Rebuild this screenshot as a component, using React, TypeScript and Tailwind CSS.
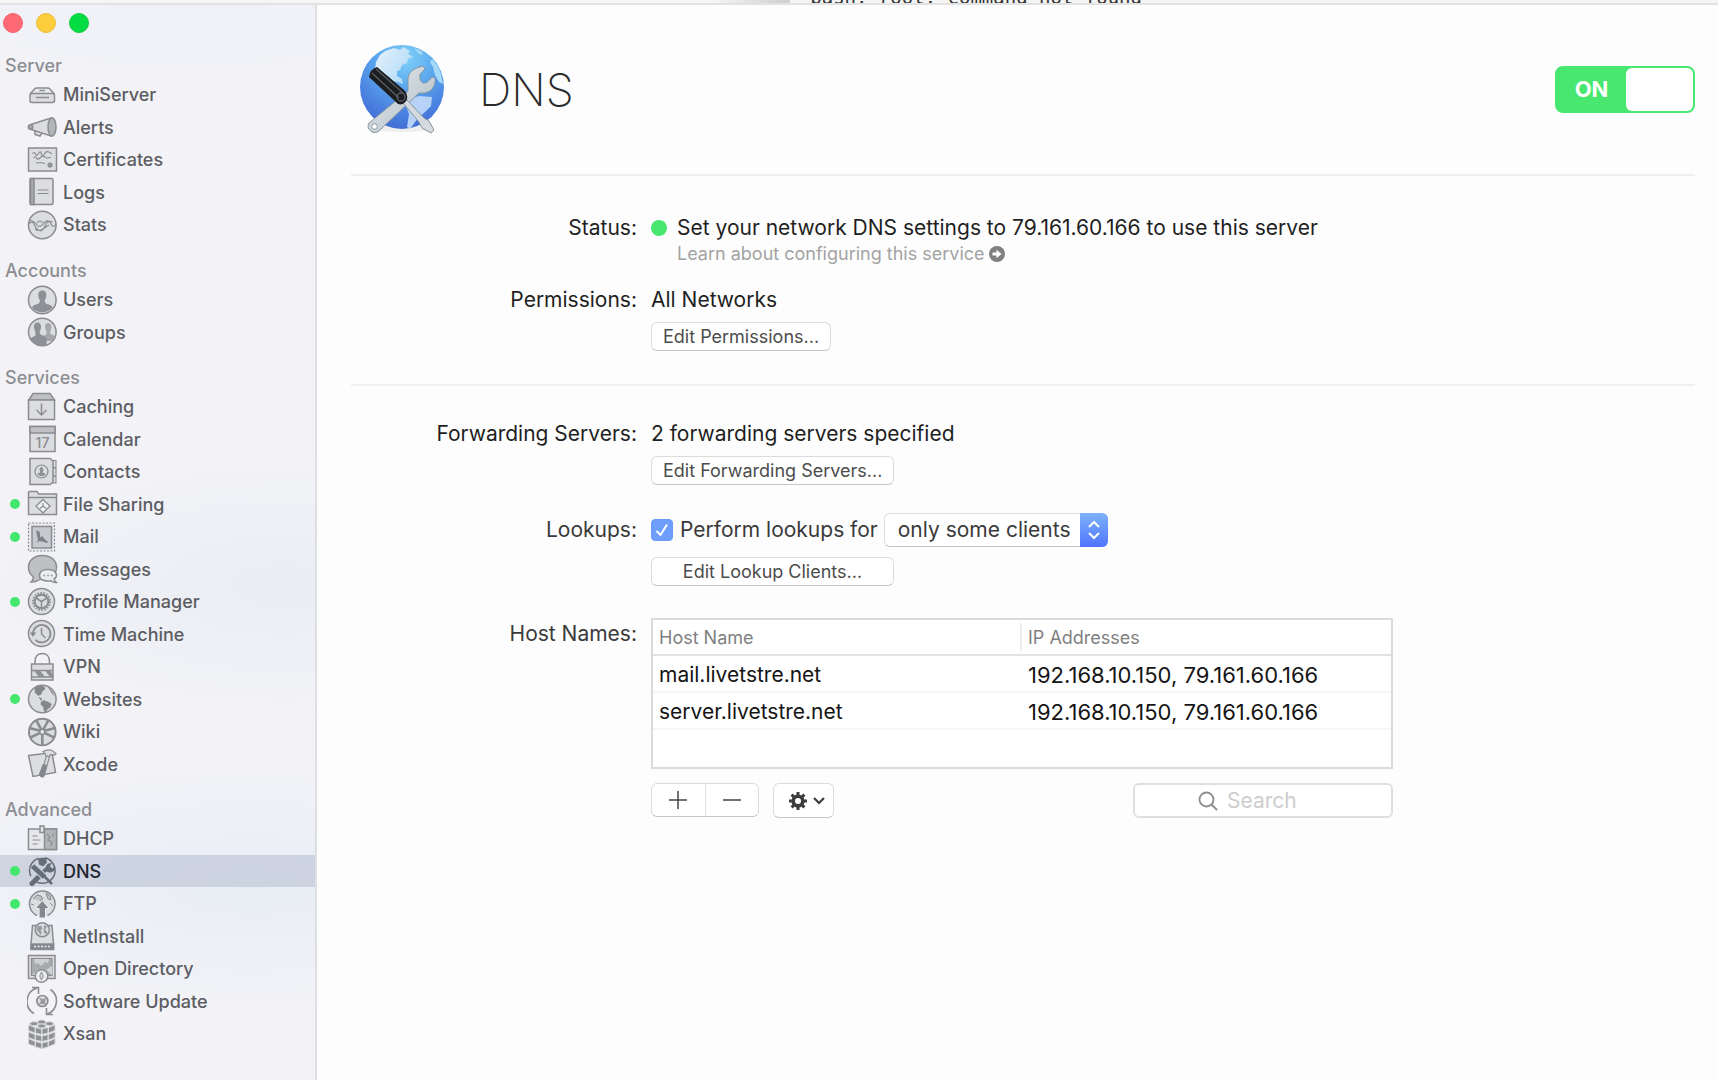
import { useState } from "react";
import type { ReactNode } from "react";
import { clsx } from "clsx";

interface SidebarItem {
  label: string;
  icon: ReactNode;
  running?: boolean;
}

interface SidebarGroup {
  title: string;
  items: SidebarItem[];
}

const hosts = [
  { name: "mail.livetstre.net", addresses: "192.168.10.150, 79.161.60.166" },
  { name: "server.livetstre.net", addresses: "192.168.10.150, 79.161.60.166" },
];

const groups: SidebarGroup[] = [
  {
    title: "Server",
    items: [
      {
        label: "MiniServer",
        icon: (
          <>
            <path d="M3 14 8 8.500Q8.500 8 9.500 8H21Q22 8 22.500 8.500L27.500 14" fill="#e6e7ea" />
            <rect x="3" y="13.500" width="24.500" height="9" rx="2" />
            <path d="M12.500 10.500h5.500M9 17.500h13" />
          </>
        ),
      },
      {
        label: "Alerts",
        icon: (
          <>
            <path d="M8 18v4.500l5 1.500 2-3" />
            <path d="M4 12.500 24 6v18L4 17.500z" />
            <circle cx="3.500" cy="15" r="2.200" fill="#a9aaae" />
            <ellipse cx="25" cy="15" rx="4" ry="9.300" fill="#b3b4b8" />
          </>
        ),
      },
      {
        label: "Certificates",
        icon: (
          <>
            <rect x="1.500" y="3" width="28" height="23" />
            <path d="M5.500 9q2-3 3 0t3-.500 3 .500 3-.300 7.500.300M6.500 13q2-2.500 3 0t4-.500 5 .200M9 18l5-.500 4 1M19 13l5-.500" strokeWidth="1.200" fill="none" />
            <circle cx="23" cy="20" r="1.800" fill="#a0a1a6" />
          </>
        ),
      },
      {
        label: "Logs",
        icon: (
          <>
            <rect x="3" y="1.500" width="23" height="26" rx="1.500" />
            <path d="M3.500 1.500h3.500v26h-3.500z" fill="#a9aaae" />
            <path d="M10.500 13h11M10.500 16.500h11" strokeWidth="1.100" />
          </>
        ),
      },
      {
        label: "Stats",
        icon: (
          <>
            <circle cx="15.300" cy="15" r="13.800" />
            <path d="M1.500 14q4-4 6 1t6 6q3-1 5-6t7-3M2 10q5 1 8 5t8-3q4-3 6 2t5 0M8 19q4 3 8 0t6-4M10 13q3-4 6 0" fill="none" strokeWidth="1.200" />
          </>
        ),
      },
    ],
  },
  {
    title: "Accounts",
    items: [
      {
        label: "Users",
        icon: (
          <>
            <circle cx="15.300" cy="15" r="13.800" />
            <path d="M15.300 5.500c3 0 4.200 2 4 4.700-.2 2.800-1 3.800-1.600 5.300 0 3 1.500 3.200 4 4 2 .700 3.300 1.500 4 3a13.500 13.500 0 0 1-20.800 0c.7-1.500 2-2.300 4-3 2.500-.800 4-1 4-4-.6-1.500-1.400-2.500-1.600-5.300-.2-2.700 1-4.700 4-4.700z" fill="#8f9095" stroke="none" />
          </>
        ),
      },
      {
        label: "Groups",
        icon: (
          <>
            <circle cx="15.300" cy="15" r="13.800" />
            <path d="M21 6c2.500 0 3.600 1.700 3.500 4-.1 2.300-.8 3.200-1.400 4.500 0 2.300 1 3 2.500 3.500l2.500 1-3 5h-9l-1-5 3.500-1c1-1 1-2 1-3.500-.7-1.300-1.400-2.200-1.500-4.500-.1-2.300.5-4 2.900-4z" fill="#a7a8ac" stroke="none" />
            <path d="M10.500 5.500c2.500 0 3.600 1.900 3.500 4.400-.1 2.500-.8 3.500-1.400 4.900 0 2.600 1.200 3 3.400 3.700 2.500 1 3.500 2 4 4.500l-.5 4.700A13.800 13.800 0 0 1 3 21.500c1.500-1.500 5.400-2 5.400-3.500V14.800C7.800 13.400 7.100 12.400 7 9.900c-.1-2.500 1-4.400 3.500-4.400z" fill="#8f9095" stroke="none" />
          </>
        ),
      },
    ],
  },
  {
    title: "Services",
    items: [
      {
        label: "Caching",
        icon: (
          <>
            <path d="M1.800 8 6 1.500h17L27.500 8z" fill="#bfc0c4" />
            <rect x="1.500" y="8" width="26" height="19.500" />
            <path d="M14.500 11.500v11M9.500 18l5 5 5-5" fill="none" />
          </>
        ),
      },
      {
        label: "Calendar",
        icon: (
          <>
            <rect x="3" y="2.500" width="25" height="25" />
            <path d="M3 2.500h25v6.500H3z" fill="#bfc0c4" />
            <text x="15.500" y="23.500" textAnchor="middle" fontSize="14" fontFamily="Inter, sans-serif" fill="#8b8c91" stroke="none">17</text>
          </>
        ),
      },
      {
        label: "Contacts",
        icon: (
          <>
            <path d="M25 3.500h4v7h-4zM25 11h4v8h-4zM25 19.500h4V26h-4z" strokeWidth="1.100" />
            <path d="M3 1.500h20l3 2.500v21l-3 2.500H3z" />
            <circle cx="14.500" cy="14.500" r="6.500" strokeWidth="1.200" />
            <path d="M14.500 10q2 0 2 2.500l-.7 3 3.200 1.500q-4 4.500-9 0l3.200-1.500-.7-3q0-2.500 2-2.500z" fill="#8f9095" stroke="none" />
          </>
        ),
      },
      {
        label: "File Sharing",
        running: true,
        icon: (
          <>
            <path d="M1.500 25.500V3.500q0-1 1-1h7q1 0 1.300 1l.7 1.500h18v20.500z" />
            <path d="M1.500 8.500h28" />
            <path d="m16 10.500 7 6.500-7 7-7-7z" fill="#f0f1f4" strokeWidth="1.300" />
            <path d="M16 14v3l3 2.500M16 17l-3 2.500" strokeWidth="1.200" fill="none" />
          </>
        ),
      },
      {
        label: "Mail",
        running: true,
        icon: (
          <>
            <rect x="1.500" y="1" width="26" height="28" strokeDasharray="2 1.500" strokeWidth="1.200" fill="#e9eaee" />
            <rect x="5" y="4.500" width="19.500" height="21.500" fill="#c9cacf" />
            <path d="M9 8.500l3.500 1 1 6 2-1.500 1.500 2.500 4 3.500-1 1-5-1.500-3-.500-2 2.500 1-4z" fill="#7f8086" stroke="none" />
          </>
        ),
      },
      {
        label: "Messages",
        icon: (
          <>
            <path d="M4 28q3-3 2-5.500Q1.500 19 1.500 13.500C1.500 6 7.500 1.500 15.500 1.500S29.500 6 29.500 13.500 22 24 15 24q-5 4-11 4z" fill="#bfc0c4" />
            <path d="M27 25q1 2.500 2.500 3.500-3 .500-5.500-1.800Q12.500 28 12.500 21.500q0-6 8.300-6t8.700 6q0 2-2.500 3.500z" fill="#ecedf0" />
            <path d="M16.500 21.500h1.500M20.300 21.500h1.500M24 21.500h1.500" />
          </>
        ),
      },
      {
        label: "Profile Manager",
        running: true,
        icon: (
          <>
            <circle cx="14.500" cy="14.500" r="13" />
            <circle cx="14.500" cy="14.500" r="8.500" strokeWidth="1.800" strokeDasharray="1.600 1.370" />
            <circle cx="14.500" cy="14.500" r="6.800" strokeWidth="2" />
            <path d="M14.500 14.500V21M14.500 14.500 9 11M14.500 14.500 20 11" />
          </>
        ),
      },
      {
        label: "Time Machine",
        icon: (
          <>
            <circle cx="14.500" cy="14.500" r="13" />
            <path d="M6 14.500a8.700 8.700 0 1 1 2.500 6.300" fill="none" strokeWidth="1.800" />
            <path d="M2.800 13.500h6.400L6 17.800z" fill="#85868b" stroke="none" />
            <path d="M14.500 9v6l4 4" fill="none" />
          </>
        ),
      },
      {
        label: "VPN",
        icon: (
          <>
            <path d="M8 12V9.500C8 4.500 11 1.500 15.200 1.500s7.300 3 7.300 8V12" fill="none" />
            <rect x="4.500" y="12" width="21.500" height="16" />
            <path d="M4.500 18.500H26M4.500 25H26" />
            <path d="M7 18.500h6l5 6.500h-6zM18 18.500h5l3 4v2.500h-3z" fill="#8f9095" stroke="none" />
          </>
        ),
      },
      {
        label: "Websites",
        running: true,
        icon: (
          <>
            <circle cx="15.300" cy="15" r="13.800" />
            <path d="M8 4q4-3 9-1.500L18 5l-3 2.500-1 3-3 1-3-3zM12 13l3 2-1 1.500zM14 18l3-1.500 4 1.500 3.500 2-1.500 3.500-3 2-1.500 3q-2.500-2.500-2-5.500l-2.500-2.500zM21.500 3.500l4 4.500 1.500 3.500-2.500-3z" fill="#85868b" stroke="#85868b" strokeWidth="0.500" />
          </>
        ),
      },
      {
        label: "Wiki",
        icon: (
          <>
            <circle cx="15.300" cy="15" r="13.300" strokeWidth="2" />
            <path d="M15.300 17.500V28M13 15.800 3.500 20.500M17.600 15.800l9.500 4.700M13 13.800 2.500 11M17.600 13.800 28 11M14.300 12.500 9 3M16.300 12.500 21.500 3" strokeWidth="2.600" />
            <circle cx="15.300" cy="14.800" r="2.600" fill="#e6e7ea" />
          </>
        ),
      },
      {
        label: "Xcode",
        icon: (
          <>
            <path d="M1.500 6.500 25 3.500l3.500 20-22.500 4z" />
            <path d="M16 2.500q5-2.500 9-1l4 3-1.500 1.500-4-.500-1 2-3.500-.500q0-2.500-3-4.500z" fill="#dfe0e3" strokeWidth="1.200" />
            <path d="m19.500 7 3 .500-2.500 9-3-1z" fill="#dfe0e3" strokeWidth="1.200" />
            <path d="m16 15.500 4 1.500-3 10.500q-1.500 1.500-3.500 0t-.5-4z" fill="#85868b" strokeWidth="1" />
          </>
        ),
      },
    ],
  },
  {
    title: "Advanced",
    items: [
      {
        label: "DHCP",
        icon: (
          <>
            <rect x="1.500" y="5" width="28" height="20.500" fill="#e6e7ea" />
            <path d="M17.500 5h12v20.500h-12z" fill="#b3b4b8" />
            <path d="M5.500 12h5M5.500 16h8M5.500 20h5M20 10l3 3-2 3 4 2-1 4M26 9v4" strokeWidth="1.200" fill="none" />
            <rect x="13" y="2" width="4" height="6.500" fill="#e6e7ea" />
          </>
        ),
      },
      {
        label: "DNS",
        running: true,
        icon: (
          <g stroke="#656d7b">
            <circle cx="15.300" cy="14.500" r="12.800" fill="#cdd3dd" strokeDasharray="30 4 22 6" />
            <path d="M11 2.500q4-1.500 8 0l1 4-4 4-4-2z" fill="#656d7b" stroke="none" />
            <path d="m5 27.500 8-8" strokeWidth="5" strokeLinecap="round" />
            <path d="m16 16 5-4" strokeWidth="4" />
            <path d="M20 8.500q2-2 4.500-1.500l-1.500 3.500 2.500 2 2.500-2q.5 4-2.500 5.500-3.500 1.500-6-1t.5-6.500z" fill="#656d7b" stroke="none" />
            <path d="m5.500 10 12 11" stroke="#cdd3dd" strokeWidth="7" />
            <path d="m5.500 10 12 11" strokeWidth="5" />
            <path d="m17 20 8 8" strokeWidth="2.500" />
          </g>
        ),
      },
      {
        label: "FTP",
        running: true,
        icon: (
          <>
            <path d="M10 26.500a12.800 12.800 0 1 1 10.500 0" />
            <path d="M6 10l4-4 4 1 2 3-3 2M19 4l4 3 1 4-3-1zM4 15l3 1M23 14l3 3" strokeWidth="1" fill="#bfc0c4" />
            <path d="m15.300 11.500 7 8h-3.800v9.500h-6.400v-9.500H8.300z" fill="#85868b" stroke="#ecedf0" strokeWidth="1" />
          </>
        ),
      },
      {
        label: "NetInstall",
        icon: (
          <>
            <path d="M5.500 4.500h19.500L26.500 23v5H4v-5z" />
            <path d="M4 23h22.500v5.500H4z" fill="#85868b" />
            <path d="M7 25.500h16" stroke="#ecedf0" strokeDasharray="2 1.500" />
            <circle cx="15.300" cy="8.800" r="7" />
            <path d="m10.500 5.500 3.500-1 1.500 3-2 2 1.500 2-1.500 2.500-2-3-2-2zM17 4l3 1.500-2 3 2.500 3-2 2-2-3z" fill="#9a9ba0" stroke="none" />
          </>
        ),
      },
      {
        label: "Open Directory",
        icon: (
          <>
            <rect x="1.500" y="1.500" width="26.500" height="23" />
            <rect x="4.500" y="4.500" width="20.500" height="17" fill="#a9aaaf" strokeWidth="1.100" />
            <path d="m7 5h15l-1 4-3-1-4 4-3-3-3 1zM5 21l6-6 2 2-2 4zM25 12v9l-6-5z" stroke="none" fill="#cfd0d4" />
            <circle cx="14.500" cy="22" r="6.300" fill="#ecedf0" />
            <path d="m14.500 18 1.800 4-1.800 4-1.800-4z" strokeWidth="1" />
          </>
        ),
      },
      {
        label: "Software Update",
        icon: (
          <>
            <path d="M7 27.500A14 14 0 0 1 10 2M5 1.500h6.500V8M23.500 3.500A14 14 0 0 1 20.500 28M26 28.500h-6.500V22" fill="none" strokeWidth="1.600" />
            <circle cx="15.300" cy="15" r="5.500" strokeWidth="1.700" />
            <path d="m12 12 4 1 3-1-1 4 1 3-3-1-4 0 2-3z" fill="#9a9ba0" stroke="none" />
          </>
        ),
      },
      {
        label: "Xsan",
        icon: (
          <g fill="#8f9095" stroke="#d5d6d9" strokeWidth="1">
            <path d="m1.500 6 6.500 2.500v5.500l-6.500-2.500zM1.500 13 8 15.500V21l-6.500-2.500zM1.500 19.500 8 22.500V27.500L1.500 25z" />
            <path d="m8.500 8.500 6 1.500v5.500l-6-1.500zM8.500 15.500l6 1.500v5.500l-6-1.500zM8.500 22.500l6 1.500v5.500l-6-1.500z" />
            <path d="m21 8.500-6 1.500v5.500l6-1.500zM21 15.500l-6 1.500v5.500l6-1.500zM21 22.500l-6 1.500v5.500l6-1.500z" />
            <path d="m28 6-6.500 2.500v5.500l6.500-2.500zM28 13l-6.500 2.500V21l6.500-2.500zM28 19.500l-6.500 3V27.500L28 25z" />
            <ellipse cx="14.700" cy="3" rx="4" ry="2" />
            <ellipse cx="7" cy="4.700" rx="4" ry="2" />
            <ellipse cx="22.500" cy="4.700" rx="4" ry="2" />
            <ellipse cx="14.700" cy="7" rx="4" ry="2" />
          </g>
        ),
      },
    ],
  },
];

function DnsLogo() {
  return (
    <svg viewBox="0 0 86 90" className="h-[90px] w-[86px] shrink-0" aria-hidden="true">
      <defs>
        <radialGradient id="ocean" cx="0.550" cy="0.150" r="0.900">
          <stop offset="0" stopColor="#7fd2f8" />
          <stop offset="0.400" stopColor="#5aa6ee" />
          <stop offset="0.750" stopColor="#4a80e0" />
          <stop offset="1" stopColor="#3f68cf" />
        </radialGradient>
        <linearGradient id="steel" x1="0" y1="0" x2="1" y2="1">
          <stop offset="0" stopColor="#e9eef1" />
          <stop offset="1" stopColor="#aebac2" />
        </linearGradient>
        <linearGradient id="land" x1="0" y1="0" x2="1" y2="0.600">
          <stop offset="0" stopColor="#e6f2fc" />
          <stop offset="1" stopColor="#b4dbf8" />
        </linearGradient>
        <clipPath id="globe">
          <circle cx="43" cy="43" r="42" />
        </clipPath>
      </defs>
      <ellipse cx="43" cy="85" rx="32" ry="3" fill="#000" opacity="0.060" />
      <circle cx="43" cy="43" r="42" fill="url(#ocean)" />
      <g clipPath="url(#globe)">
        <path d="M21 11 26 7l9-3 6 2 3-3 7 4-2 3 5 3-5 2-1 4-5 2-2 5-3 1v5l5 3 1 5-5-2-5-1-5-5-6-2-7-4 1-8z" fill="url(#land)" />
        <path d="m55 4 7 3 2 4-4-1zM73 15l6 7 3 8 2 10-4-2-4-7-2-8-3-5z" fill="#a4daf7" />
        <path d="m50 55 10-3 13 1-1 9-6 6-7 6-8 11-3-2 2-13-3-8z" fill="#b6d3f7" />
      </g>
      <path d="M49 47V34q1-9 15-12l2 3-5 5q-1 7 3 9 4 1 9-6l3 1q1 8-5 13-5 3-11 2L22 85q-4 5-9 3-6-4-3-9z" fill="url(#steel)" stroke="#8796a0" strokeWidth="1" />
      <circle cx="15.500" cy="82.500" r="2.800" fill="#fff" stroke="#8c9aa3" />
      <path d="m44 59 4-3 17 18 5 3 5 9-3 3-9-5-3-6z" fill="#d3dbe0" stroke="#8796a0" strokeWidth="1" />
      <path d="M10 33q1-8 8-10l27 23q4 4 3 9-3 7-9 5z" fill="#1c1d20" />
      <path d="M13 29l27 25M17 25l27 24" stroke="#5b5e64" strokeWidth="1.200" />
      <circle cx="42" cy="53" r="4" fill="none" stroke="#5b5e64" strokeWidth="1.300" />
    </svg>
  );
}

function Sidebar() {
  return (
    <aside className="w-[317px] shrink-0 border-r-2 border-[#dedfe3] bg-[#f3f3f7] bg-[radial-gradient(ellipse_100%_12%_at_90%_54%,#e9edf3_0%,transparent_100%),radial-gradient(ellipse_120%_12%_at_80%_82%,#e8edf4_0%,transparent_100%),radial-gradient(ellipse_100%_8%_at_60%_0%,#eef1f7_0%,transparent_100%)] pb-7">
      <div className="flex gap-[13px] px-[3px] pt-2">
        <button aria-label="Close" className="size-5 rounded-full border border-[#f2606b] bg-[#fd6a74]" />
        <button aria-label="Minimize" className="size-5 rounded-full border border-[#ecbb3a] bg-[#fcce3e]" />
        <button aria-label="Zoom" className="size-5 rounded-full border border-[#10c93f] bg-[#04dc44]" />
      </div>
      <nav className="mt-5 flex flex-col gap-[17px]">
        {groups.map((group) => (
          <section key={group.title}>
            <h2 className="pl-[5px] text-[18px] leading-[25px] font-medium text-[#8d8e93]">{group.title}</h2>
            <ul>
              {group.items.map((item) => (
                <li key={item.label} className="h-8 odd:h-[33px]">
                  <a
                    href={`#${item.label}`}
                    className={clsx(
                      "flex h-full items-center pl-[10px] text-[18px] font-medium",
                      item.label === "DNS" ? "bg-[#b9c2d3]/60 text-[#23252f]" : "text-[#5c5d63]"
                    )}
                  >
                    <span className={clsx("size-[10px] rounded-full", item.running && "bg-[#43e76d]")} />
                    <svg
                      viewBox="0 0 31 30"
                      className="ml-[7px] h-[30px] w-[31px]"
                      fill="#dcdde1"
                      stroke="#8b8c91"
                      strokeWidth="1.500"
                      aria-hidden="true"
                    >
                      {item.icon}
                    </svg>
                    <span className="ml-[5px]">{item.label}</span>
                  </a>
                </li>
              ))}
            </ul>
          </section>
        ))}
      </nav>
    </aside>
  );
}

const rowClass = "grid grid-cols-[286px_1fr] gap-x-[14px]";
const labelClass = "text-right text-[21px] leading-7";
const buttonClass =
  "h-[29px] rounded-[6px] border border-[#dcdcdc] border-b-[#c6c6c6] bg-white px-[11px] text-[18px] leading-none text-[#4c4c4c]";

export default function App() {
  const [on, setOn] = useState(true);
  const [lookups, setLookups] = useState(true);

  return (
    <div className="flex min-h-screen flex-col bg-[#fdfdfd] font-['Inter',sans-serif] text-[#1f1f1f]">
      {/* Sliver of the terminal window behind */}
      <div className="flex h-[5px] overflow-hidden border-b-2 border-[#e2e2e2] bg-[#f4f4f4]">
        <div className="w-[46%] bg-linear-to-r from-[#f6f6f6] from-90% to-[#cfcfcf]" />
        <p className="-mt-[14px] pl-5 font-['DejaVu_Sans_Mono',monospace] text-[19px] leading-[22px] whitespace-pre text-[#333]">
          bash: root: command not found
        </p>
      </div>

      <div className="flex flex-1">
        <Sidebar />
        <main className="min-w-0 flex-1 pr-[23px] pl-[34px]">
          <header className="flex items-center border-b-2 border-[#efefef] pt-[39px] pb-10 pl-2">
            <DnsLogo />
            <h1 className="ml-[34px] text-[45px] leading-none font-extralight text-[#2b2b2b]">DNS</h1>
            <button
              role="switch"
              aria-checked={on}
              onClick={() => setOn(!on)}
              className="ml-auto flex h-[47px] w-[140px] items-stretch rounded-lg border-2 border-[#47e770] bg-[#47e770]"
            >
              <span className="flex flex-1 items-center justify-center text-[22px] font-bold text-white">ON</span>
              <span className="w-[67px] rounded-md bg-white" />
            </button>
          </header>

          <section className="border-b-2 border-[#f0f0f0] pt-[38px] pb-[33px]">
            <div className={rowClass}>
              <span className={labelClass}>Status:</span>
              <div className="flex">
                <span className="mt-[6px] size-4 shrink-0 rounded-full bg-[#47e770]" />
                <div className="ml-[10px]">
                  <p className="text-[21px] leading-7">Set your network DNS settings to 79.161.60.166 to use this server</p>
                  <a href="#learn" className="flex items-center gap-1 text-[18px] leading-6 text-[#a3a3a3]">
                    Learn about configuring this service
                    <svg viewBox="0 0 16 16" className="size-4" aria-hidden="true">
                      <circle cx="8" cy="8" r="8" fill="#808080" />
                      <path d="M3.500 6.500h4V3.800L12.500 8l-5 4.200V9.500h-4z" fill="#fff" />
                    </svg>
                  </a>
                </div>
              </div>
            </div>
            <div className={clsx(rowClass, "mt-5")}>
              <span className={labelClass}>Permissions:</span>
              <div>
                <p className="text-[21px] leading-7">All Networks</p>
                <button className={clsx(buttonClass, "mt-2")}>Edit Permissions...</button>
              </div>
            </div>
          </section>

          <section className="pt-[34px]">
            <div className={rowClass}>
              <span className={labelClass}>Forwarding Servers:</span>
              <div>
                <p className="text-[21px] leading-7">2 forwarding servers specified</p>
                <button className={clsx(buttonClass, "mt-2 min-w-[243px]")}>Edit Forwarding Servers...</button>
              </div>
            </div>

            <div className={clsx(rowClass, "mt-7 text-[#3a3a3a]")}>
              <span className={clsx(labelClass, "pt-[3px]")}>Lookups:</span>
              <div>
                <div className="flex h-[34px] items-center">
                  <span className="relative flex">
                    <input
                      id="lookups"
                      type="checkbox"
                      checked={lookups}
                      onChange={() => setLookups(!lookups)}
                      className="size-[22px] appearance-none rounded-[4px] border border-[#6b9bfa] checked:bg-[#6e9efc]"
                    />
                    <svg viewBox="0 0 22 22" className="pointer-events-none absolute inset-0" fill="none" stroke="#fff" strokeWidth="2" aria-hidden="true">
                      <path d="m5.500 12 4 4 6.500-10.500" />
                    </svg>
                  </span>
                  <label htmlFor="lookups" className="ml-[7px] text-[21px] leading-7">
                    Perform lookups for
                  </label>
                  <span className="relative ml-[6px] flex">
                    <select
                      aria-label="Perform lookups for"
                      className="h-[34px] w-[224px] appearance-none rounded-[6px] border border-[#dcdcdc] border-b-[#c6c6c6] bg-white pl-[13px] text-[21px]"
                    >
                      <option>only some clients</option>
                      <option>all clients</option>
                    </select>
                    <span className="pointer-events-none absolute inset-y-0 right-0 flex w-7 items-center justify-center rounded-r-[6px] bg-linear-to-b from-[#7db1fb] to-[#5273fb]">
                      <svg viewBox="0 0 14 20" className="h-5 w-[14px]" fill="none" stroke="#fff" strokeWidth="2" aria-hidden="true">
                        <path d="m2 7 5-5 5 5M2 13l5 5 5-5" />
                      </svg>
                    </span>
                  </span>
                </div>
                <button className={clsx(buttonClass, "mt-[10px] min-w-[243px]")}>Edit Lookup Clients...</button>
              </div>
            </div>

            <div className={clsx(rowClass, "mt-8")}>
              <span className={clsx(labelClass, "pt-[2px] text-[#3a3a3a]")}>Host Names:</span>
              <div className="w-full max-w-[742px]">
                <div className="border-2 border-[#dadada] bg-white">
                  <table className="w-full table-fixed text-left text-[21px] text-[#151515]">
                    <thead>
                      <tr className="h-[35px] border-b-2 border-[#e2e2e2] text-[18px] text-[#7f7f7f]">
                        <th className="pl-[6px] font-normal">
                          <span className="flex h-7 items-center border-r-2 border-[#ececec]">Host Name</span>
                        </th>
                        <th className="pl-[6px] font-normal">IP Addresses</th>
                      </tr>
                    </thead>
                    <tbody>
                      {hosts.map((host) => (
                        <tr key={host.name} className="h-[37px] border-b-2 border-[#f6f6f6]">
                          <td className="pt-[3px] pl-[6px] leading-7">{host.name}</td>
                          <td className="pt-[3px] pl-[6px] text-[22px] leading-7">{host.addresses}</td>
                        </tr>
                      ))}
                      <tr className="h-[38px]">
                        <td colSpan={2} />
                      </tr>
                    </tbody>
                  </table>
                </div>

                <div className="mt-[14px] flex items-start">
                  <div className="flex h-[34px] w-[108px] rounded-[6px] border border-[#dcdcdc] border-b-[#c6c6c6] bg-white">
                    <button aria-label="Add host" className="flex flex-1 items-center justify-center border-r border-[#e0e0e0]">
                      <svg viewBox="0 0 18 18" className="size-[18px]" stroke="#444" strokeWidth="1.500" aria-hidden="true">
                        <path d="M9 0v18M0 9h18" />
                      </svg>
                    </button>
                    <button aria-label="Remove host" className="flex flex-1 items-center justify-center">
                      <svg viewBox="0 0 18 18" className="size-[18px]" stroke="#444" strokeWidth="1.500" aria-hidden="true">
                        <path d="M0 9h18" />
                      </svg>
                    </button>
                  </div>
                  <button
                    aria-label="Actions"
                    className="ml-[14px] flex h-[35px] w-[61px] items-center justify-end gap-[6px] rounded-[6px] border border-[#dcdcdc] border-b-[#c6c6c6] bg-white pr-2"
                  >
                    <svg viewBox="0 0 18 18" className="size-[18px]" fill="none" stroke="#3c3c3c" aria-hidden="true">
                      <circle cx="9" cy="9" r="4.800" strokeWidth="3.600" />
                      <path d="M9 0v3M9 15v3M0 9h3M15 9h3M2.600 2.600l2.200 2.200M13.200 13.200l2.200 2.200M2.600 15.400l2.200-2.200M13.200 4.800l2.200-2.200" strokeWidth="3" />
                    </svg>
                    <svg viewBox="0 0 12 8" className="h-2 w-3" fill="none" stroke="#3c3c3c" strokeWidth="2.200" aria-hidden="true">
                      <path d="m1 1 5 5 5-5" />
                    </svg>
                  </button>
                  <div className="relative ml-auto w-[260px]">
                    <svg
                      viewBox="0 0 20 20"
                      className="pointer-events-none absolute top-2 left-[65px] size-5"
                      fill="none"
                      stroke="#8c8c8c"
                      strokeWidth="1.800"
                      aria-hidden="true"
                    >
                      <circle cx="8.500" cy="8.500" r="7" />
                      <path d="m13.500 13.500 5.500 5.500" />
                    </svg>
                    <input
                      type="search"
                      aria-label="Search"
                      placeholder="Search"
                      className="h-[35px] w-full rounded-[6px] border-2 border-[#dfdfdf] bg-white pl-[92px] text-[21px] placeholder:text-[#cdcdcd]"
                    />
                  </div>
                </div>
              </div>
            </div>
          </section>
        </main>
      </div>
    </div>
  );
}
